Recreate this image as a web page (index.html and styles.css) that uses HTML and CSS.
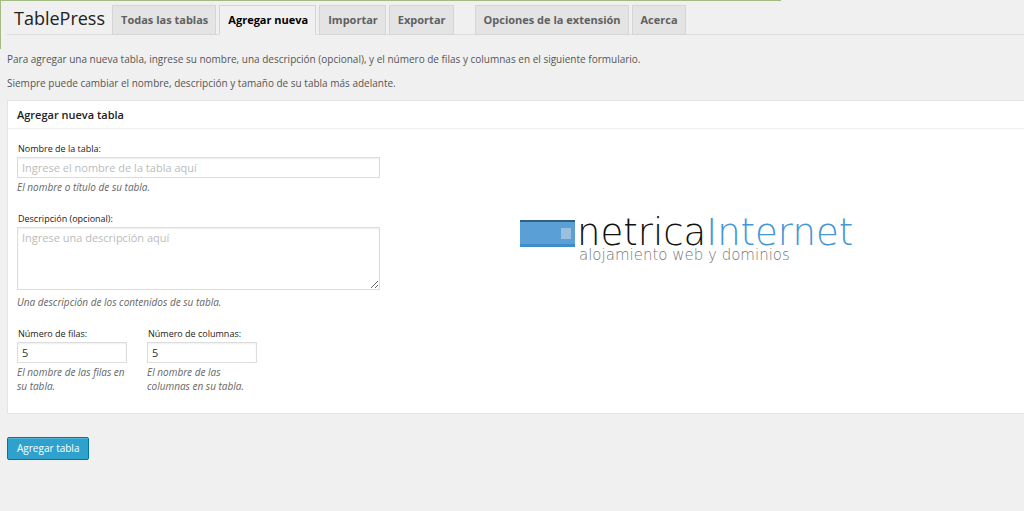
FILE: index.html
```html
<!DOCTYPE html>
<html lang="es">
<head>
    <meta charset="UTF-8">
    <meta name="viewport" content="width=device-width, initial-scale=1.0">
    <title>Agregar nueva tabla - TablePress</title>
    <link rel="stylesheet" href="styles.css">
</head>
<body>
    <div class="marco"></div>
    <header class="cabecera">
        <h1>TablePress</h1>
        <nav class="pestanas">
            <a href="#todas">Todas las tablas</a>
            <a href="#agregar" class="activa">Agregar nueva</a>
            <a href="#importar">Importar</a>
            <a href="#exportar">Exportar</a>
            <a href="#opciones" class="separada">Opciones de la extensión</a>
            <a href="#acerca">Acerca</a>
        </nav>
    </header>
    <main>
        <p class="intro">Para agregar una nueva tabla, ingrese su nombre, una descripción (opcional), y el número de filas y columnas en el siguiente formulario.</p>
        <p class="intro">Siempre puede cambiar el nombre, descripción y tamaño de su tabla más adelante.</p>
        <form>
            <section class="panel">
                <h2>Agregar nueva tabla</h2>
                <div class="contenido">
                    <div class="campos">
                        <div class="campo">
                            <label for="nombre">Nombre de la tabla:</label>
                            <input type="text" id="nombre" placeholder="Ingrese el nombre de la tabla aquí">
                            <p>El nombre o título de su tabla.</p>
                        </div>
                        <div class="campo">
                            <label for="descripcion">Descripción (opcional):</label>
                            <textarea id="descripcion" placeholder="Ingrese una descripción aquí"></textarea>
                            <p>Una descripción de los contenidos de su tabla.</p>
                        </div>
                        <div class="numeros">
                            <div class="campo">
                                <label for="filas">Número de filas:</label>
                                <input type="text" id="filas" value="5">
                                <p>El nombre de las filas en su tabla.</p>
                            </div>
                            <div class="campo">
                                <label for="columnas">Número de columnas:</label>
                                <input type="text" id="columnas" value="5">
                                <p>El nombre de las columnas en su tabla.</p>
                            </div>
                        </div>
                    </div>
                    <div class="logo">
                        <svg width="55" height="27" viewBox="0 0 55 27" aria-hidden="true">
                            <rect width="55" height="27" fill="#5a9fd6"/>
                            <rect width="55" height="2" fill="#2f607f"/>
                            <rect y="24" width="55" height="3" fill="#3d8dcc"/>
                            <rect x="41" y="8" width="10" height="11" fill="#9bc0df"/>
                        </svg>
                        <div class="logo-texto">
                            <span class="marca">netrica<span>Internet</span></span>
                            <span class="lema">alojamiento web y dominios</span>
                        </div>
                    </div>
                </div>
            </section>
            <button type="submit">Agregar tabla</button>
        </form>
    </main>
</body>
</html>
```
FILE: styles.css
```css
* {
    box-sizing: border-box;
}
body {
    font-family: "Open Sans", sans-serif;
    font-size: 10px;
    color: #444;
    background-color: #f0f0f0;
    margin: 0;
}
h1, h2, p {
    margin: 0;
}
.marco {
    position: absolute;
    top: 0;
    left: 0;
    width: 781px;
    height: 49px;
    border-top: 1px solid #a3bb83;
    border-left: 1px solid #a3bb83;
}
.cabecera {
    display: flex;
    align-items: flex-end;
    margin-left: 7px;
    padding-top: 5px;
    border-bottom: 1px solid #ddd;
}
h1 {
    font-size: 18px;
    font-weight: 400;
    line-height: 24px;
    color: #222;
    padding: 0 7px 4px 7px;
}
.pestanas {
    position: relative;
    display: flex;
    gap: 3px;
    margin-bottom: -1px;
}
.pestanas a {
    font-size: 11px;
    font-weight: 700;
    line-height: 20px;
    color: #606060;
    background-color: #e4e4e4;
    border: 1px solid #d5d5d5;
    padding: 4px 7px 4px 8px;
    text-decoration: none;
    white-space: nowrap;
}
.pestanas a.activa {
    color: #000;
    background-color: #f0f0f0;
    border-bottom-color: #f0f0f0;
}
.pestanas a.separada {
    margin-left: 18px;
}
main {
    padding: 16px 0 0 7px;
}
.intro {
    line-height: 16px;
    margin-bottom: 8px;
    color: #555;
}
.panel {
    margin-top: 9px;
    background-color: white;
    border: 1px solid #e5e5e5;
    border-right: none;
}
h2 {
    font-size: 11px;
    font-weight: 600;
    line-height: 27px;
    color: #222;
    padding: 0 9px;
    border-bottom: 1px solid #eee;
}
.contenido {
    display: flex;
    gap: 140px;
    padding: 11px 9px 20px;
}
.campos {
    flex: 0 1 363px;
}
.campo {
    margin-bottom: 16px;
}
.campo label {
    display: block;
    font-size: 9px;
    line-height: 17px;
    color: #222;
    padding-left: 1px;
}
.campo input, .campo textarea {
    display: block;
    width: 100%;
    font-family: inherit;
    font-size: 11px;
    line-height: 15px;
    color: #333;
    background-color: white;
    border: 1px solid #ddd;
    padding: 2px 4px;
    margin: 0 0 2px;
    box-shadow: inset 0 1px 2px rgba(0, 0, 0, 0.07);
}
.campo textarea {
    height: 63px;
    margin-bottom: 5px;
}
.campo ::placeholder {
    color: #bbb;
}
.campo p {
    font-style: italic;
    line-height: 14px;
    color: #666;
}
.numeros {
    display: flex;
    gap: 20px;
}
.numeros .campo {
    width: 110px;
    margin-bottom: 0;
}
.numeros label {
    white-space: nowrap;
}
.logo {
    display: flex;
    align-items: flex-start;
    gap: 2px;
    padding-top: 80px;
    font-family: "DejaVu Sans Light", "DejaVu Sans", sans-serif;
    font-weight: 200;
}
.logo svg {
    flex: none;
}
.logo-texto {
    white-space: nowrap;
}
.marca, .lema {
    display: block;
}
.marca {
    font-size: 37px;
    line-height: 26px;
    color: #111;
}
.marca span {
    color: #4596d8;
}
.lema {
    font-size: 15px;
    line-height: 18px;
    color: #777;
    padding-left: 2px;
}
button {
    font-family: inherit;
    font-size: 10px;
    line-height: 21px;
    color: white;
    background-color: #2ea2cc;
    border: 1px solid #0074a2;
    border-radius: 2px;
    padding: 0 9px;
    margin-top: 23px;
    box-shadow: inset 0 1px 0 rgba(120, 200, 230, 0.5);
    cursor: pointer;
}
@media (max-width: 800px) {
    .contenido {
        flex-wrap: wrap;
        gap: 20px;
    }
}
```
